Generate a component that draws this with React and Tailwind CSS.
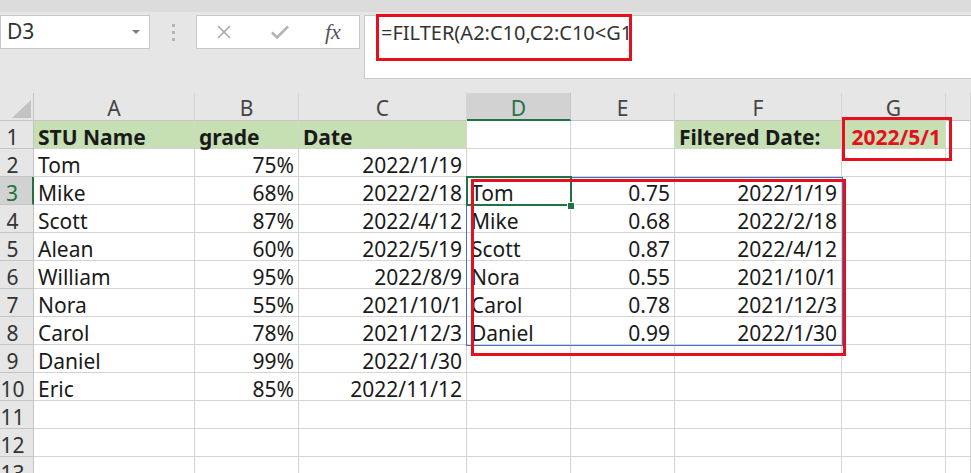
import React from 'react';

const cols = ['A', 'B', 'C', 'D', 'E', 'F', 'G', ''];

// row data: [A, B, C, D, E, F, G]
const rows = [
  [
    { t: 'STU Name', cls: 'font-bold bg-[#c6e0b4]' },
    { t: 'grade', cls: 'font-bold bg-[#c6e0b4]' },
    { t: 'Date', cls: 'font-bold bg-[#c6e0b4]' },
    null,
    null,
    { t: 'Filtered Date:', cls: 'font-bold bg-[#c6e0b4]' },
    { t: '2022/5/1', cls: 'font-bold bg-[#c6e0b4] text-[#e5101d] text-right' },
  ],
  [{ t: 'Tom' }, { t: '75%', r: 1 }, { t: '2022/1/19', r: 1 }],
  [{ t: 'Mike' }, { t: '68%', r: 1 }, { t: '2022/2/18', r: 1 }, { t: 'Tom' }, { t: '0.75', r: 1 }, { t: '2022/1/19', r: 1 }],
  [{ t: 'Scott' }, { t: '87%', r: 1 }, { t: '2022/4/12', r: 1 }, { t: 'Mike' }, { t: '0.68', r: 1 }, { t: '2022/2/18', r: 1 }],
  [{ t: 'Alean' }, { t: '60%', r: 1 }, { t: '2022/5/19', r: 1 }, { t: 'Scott' }, { t: '0.87', r: 1 }, { t: '2022/4/12', r: 1 }],
  [{ t: 'William' }, { t: '95%', r: 1 }, { t: '2022/8/9', r: 1 }, { t: 'Nora' }, { t: '0.55', r: 1 }, { t: '2021/10/1', r: 1 }],
  [{ t: 'Nora' }, { t: '55%', r: 1 }, { t: '2021/10/1', r: 1 }, { t: 'Carol' }, { t: '0.78', r: 1 }, { t: '2021/12/3', r: 1 }],
  [{ t: 'Carol' }, { t: '78%', r: 1 }, { t: '2021/12/3', r: 1 }, { t: 'Daniel' }, { t: '0.99', r: 1 }, { t: '2022/1/30', r: 1 }],
  [{ t: 'Daniel' }, { t: '99%', r: 1 }, { t: '2022/1/30', r: 1 }],
  [{ t: 'Eric' }, { t: '85%', r: 1 }, { t: '2022/11/12', r: 1 }],
  [],
  [],
  [],
];

const gridCols = 'grid grid-cols-[34px_161px_104px_168px_104px_104px_167px_104px_1fr]';

function Toolbar() {
  return (
    <div className="relative h-[93px] bg-[#e6e6e6]">
      <div className="h-[12px] bg-[#dcdcdc]" />
      <div className="flex items-start pt-[3px]">
        {/* Name box */}
        <div className="flex h-[34px] w-[150px] items-center justify-between border border-[#c8c8c8] bg-white pl-[6px] pr-[9px]">
          <span className="text-[21px] text-[#333]">D3</span>
          <svg width="8" height="5" viewBox="0 0 8 5"><path d="M0 0h8L4 4z" fill="#7a7a7a" /></svg>
        </div>
        <div className="flex h-[34px] w-[46px] flex-col items-center justify-center gap-[4px]">
          <span className="h-[3px] w-[3px] bg-[#b4b4b4]" />
          <span className="h-[3px] w-[3px] bg-[#b4b4b4]" />
          <span className="h-[3px] w-[3px] bg-[#b4b4b4]" />
        </div>
        {/* Cancel / enter / fx */}
        <div className="flex h-[34px] w-[164px] items-center border border-[#c8c8c8] bg-white">
          <svg className="ml-[20px]" width="14" height="14" viewBox="0 0 14 14">
            <path d="M1 1l12 12M13 1L1 13" stroke="#a9a9a9" strokeWidth="1.6" />
          </svg>
          <svg className="ml-[40px]" width="18" height="14" viewBox="0 0 18 14">
            <path d="M1 7.5l5 5L17 1.5" stroke="#b4b4b4" strokeWidth="2.6" fill="none" />
          </svg>
          <span className="ml-[36px] font-['Liberation_Serif',serif] text-[22px] italic leading-none text-[#555]">
            fx
          </span>
        </div>
        {/* Formula bar */}
        <div className="ml-[4px] h-[64px] flex-1 border-y border-l border-[#c8c8c8] bg-white pl-[16px] pt-[2px]">
          <span className="text-[20px] leading-[30px] text-[#333]">=FILTER(A2:C10,C2:C10&lt;G1</span>
        </div>
      </div>
      <div className="absolute left-[376px] top-[14px] h-[47px] w-[256px] border-[3px] border-[#e5101d]" />
    </div>
  );
}

function Sheet() {
  return (
    <div className="relative">
      <div className={`${gridCols} h-[28px] border-b border-[#c4c4c4] bg-[#e6e6e6]`}>
        <div className="relative border-r border-[#c4c4c4]">
          <svg className="absolute left-[12px] top-[7px]" width="19" height="18" viewBox="0 0 19 18">
            <path d="M19 0V18H0z" fill="#c2c2c2" />
          </svg>
        </div>
        {cols.map((c, i) => (
          <div
            key={i}
            className={
              c === 'D'
                ? 'border-b-2 border-r border-b-[#217346] border-r-[#c4c4c4] bg-[#d2d2d2] pt-[5px] text-center text-[21px] leading-[21px] text-[#217346]'
                : 'border-r border-[#d4d4d4] pt-[5px] text-center text-[21px] leading-[21px] text-[#444]'
            }
          >
            {c}
          </div>
        ))}
      </div>
      {rows.map((row, ri) => (
        <div key={ri} className={`${gridCols} h-[28px]`}>
          <div
            className={
              ri === 2
                ? 'border-b border-r-2 border-b-[#c4c4c4] border-r-[#217346] bg-[#d2d2d2] pr-[8px] pt-[5px] text-center text-[21px] leading-[22px] text-[#217346]'
                : 'border-b border-r border-[#c4c4c4] bg-[#e6e6e6] pr-[8px] pt-[5px] text-center text-[21px] leading-[22px] text-[#333]'
            }
          >
            {ri + 1}
          </div>
          {cols.map((_, ci) => {
            const cell = row[ci];
            return (
              <div
                key={ci}
                className={`overflow-visible whitespace-nowrap border-b border-r border-[#d4d4d4] px-[4px] pt-[5px] text-[21px] leading-[22px] text-[#1a1a1a] ${
                  cell && cell.r ? 'text-right' : ''
                } ${cell && cell.cls ? cell.cls : ''}`}
              >
                {cell ? cell.t : ''}
              </div>
            );
          })}
        </div>
      ))}

      {/* spill range */}
      <div className="absolute left-[466px] top-[84px] h-[169px] w-[377px] border border-[#4472c4]" />
      {/* active cell */}
      <div className="absolute left-[466px] top-[83px] h-[30px] w-[106px] border-2 border-[#217346]" />
      <div className="absolute left-[568px] top-[110px] h-[6px] w-[6px] bg-[#217346] outline outline-1 outline-white" />
      {/* annotations */}
      <div className="absolute left-[471px] top-[86px] h-[177px] w-[375px] border-[3px] border-[#e5101d]" />
      <div className="absolute left-[842px] top-[24px] h-[44px] w-[110px] border-[3px] border-[#e5101d]" />
    </div>
  );
}

export default function App() {
  return (
    <div className="h-[473px] w-[971px] overflow-hidden bg-white font-['Noto_Sans',sans-serif]">
      <Toolbar />
      <Sheet />
    </div>
  );
}
